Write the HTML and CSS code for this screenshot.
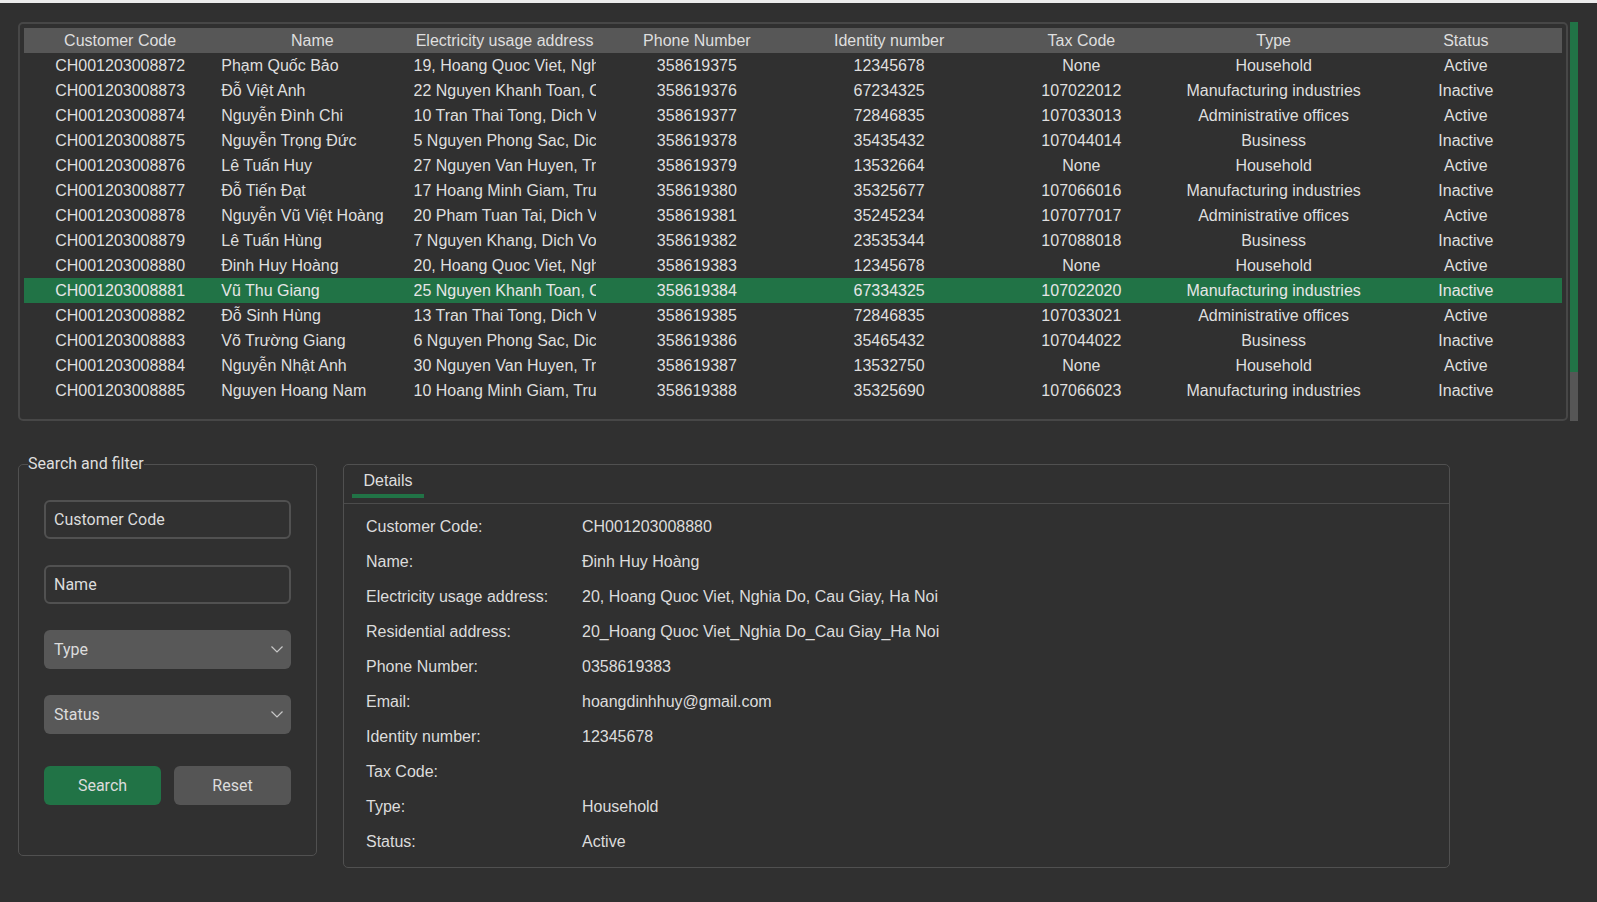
FILE: index.html
```html
<!DOCTYPE html>
<html lang="vi">
<head>
<meta charset="utf-8">
<title>Customers</title>
<link rel="stylesheet" href="styles.css">
</head>
<body>
<div class="topbar"></div>
<main class="app">
  <div class="table-row">
    <div class="table-frame">
      <table class="grid">
        <colgroup>
          <col><col><col><col><col><col><col><col>
        </colgroup>
        <thead>
          <tr>
            <th>Customer Code</th><th>Name</th><th>Electricity usage address</th><th>Phone Number</th><th>Identity number</th><th>Tax Code</th><th>Type</th><th>Status</th>
          </tr>
        </thead>
        <tbody>
          <tr><td>CH001203008872</td><td class="l">Phạm Quốc Bảo</td><td class="l"><div class="clip">19, Hoang Quoc Viet, Ngh</div></td><td>358619375</td><td>12345678</td><td>None</td><td>Household</td><td>Active</td></tr>
          <tr><td>CH001203008873</td><td class="l">Đỗ Việt Anh</td><td class="l"><div class="clip">22 Nguyen Khanh Toan, C</div></td><td>358619376</td><td>67234325</td><td>107022012</td><td>Manufacturing industries</td><td>Inactive</td></tr>
          <tr><td>CH001203008874</td><td class="l">Nguyễn Đình Chi</td><td class="l"><div class="clip">10 Tran Thai Tong, Dich V</div></td><td>358619377</td><td>72846835</td><td>107033013</td><td>Administrative offices</td><td>Active</td></tr>
          <tr><td>CH001203008875</td><td class="l">Nguyễn Trọng Đức</td><td class="l"><div class="clip">5 Nguyen Phong Sac, Dic</div></td><td>358619378</td><td>35435432</td><td>107044014</td><td>Business</td><td>Inactive</td></tr>
          <tr><td>CH001203008876</td><td class="l">Lê Tuấn Huy</td><td class="l"><div class="clip">27 Nguyen Van Huyen, Tr</div></td><td>358619379</td><td>13532664</td><td>None</td><td>Household</td><td>Active</td></tr>
          <tr><td>CH001203008877</td><td class="l">Đỗ Tiến Đạt</td><td class="l"><div class="clip">17 Hoang Minh Giam, Tru</div></td><td>358619380</td><td>35325677</td><td>107066016</td><td>Manufacturing industries</td><td>Inactive</td></tr>
          <tr><td>CH001203008878</td><td class="l">Nguyễn Vũ Việt Hoàng</td><td class="l"><div class="clip">20 Pham Tuan Tai, Dich V</div></td><td>358619381</td><td>35245234</td><td>107077017</td><td>Administrative offices</td><td>Active</td></tr>
          <tr><td>CH001203008879</td><td class="l">Lê Tuấn Hùng</td><td class="l"><div class="clip">7 Nguyen Khang, Dich Vo</div></td><td>358619382</td><td>23535344</td><td>107088018</td><td>Business</td><td>Inactive</td></tr>
          <tr><td>CH001203008880</td><td class="l">Đinh Huy Hoàng</td><td class="l"><div class="clip">20, Hoang Quoc Viet, Ngh</div></td><td>358619383</td><td>12345678</td><td>None</td><td>Household</td><td>Active</td></tr>
          <tr class="sel"><td>CH001203008881</td><td class="l">Vũ Thu Giang</td><td class="l"><div class="clip">25 Nguyen Khanh Toan, C</div></td><td>358619384</td><td>67334325</td><td>107022020</td><td>Manufacturing industries</td><td>Inactive</td></tr>
          <tr><td>CH001203008882</td><td class="l">Đỗ Sinh Hùng</td><td class="l"><div class="clip">13 Tran Thai Tong, Dich V</div></td><td>358619385</td><td>72846835</td><td>107033021</td><td>Administrative offices</td><td>Active</td></tr>
          <tr><td>CH001203008883</td><td class="l">Võ Trường Giang</td><td class="l"><div class="clip">6 Nguyen Phong Sac, Dic</div></td><td>358619386</td><td>35465432</td><td>107044022</td><td>Business</td><td>Inactive</td></tr>
          <tr><td>CH001203008884</td><td class="l">Nguyễn Nhật Anh</td><td class="l"><div class="clip">30 Nguyen Van Huyen, Tr</div></td><td>358619387</td><td>13532750</td><td>None</td><td>Household</td><td>Active</td></tr>
          <tr><td>CH001203008885</td><td class="l">Nguyen Hoang Nam</td><td class="l"><div class="clip">10 Hoang Minh Giam, Tru</div></td><td>358619388</td><td>35325690</td><td>107066023</td><td>Manufacturing industries</td><td>Inactive</td></tr>
        </tbody>
      </table>
    </div>
    <div class="scrollbar"><div class="thumb"></div></div>
  </div>

  <div class="lower">
    <fieldset class="filter">
      <legend>Search and filter</legend>
      <div class="filter-body">
        <div class="entry">Customer Code</div>
        <div class="entry">Name</div>
        <div class="select"><span>Type</span><svg class="chev" width="12" height="7" viewBox="0 0 12 7"><path d="M0.5 0.5 L6 6 L11.5 0.5" fill="none" stroke="#c8c8c8" stroke-width="1.2"/></svg></div>
        <div class="select"><span>Status</span><svg class="chev" width="12" height="7" viewBox="0 0 12 7"><path d="M0.5 0.5 L6 6 L11.5 0.5" fill="none" stroke="#c8c8c8" stroke-width="1.2"/></svg></div>
        <div class="buttons">
          <button class="btn primary">Search</button>
          <button class="btn">Reset</button>
        </div>
      </div>
    </fieldset>

    <section class="details">
      <div class="tabs"><div class="tab">Details</div></div>
      <div class="info">
        <div class="k">Customer Code:</div><div class="v">CH001203008880</div>
        <div class="k">Name:</div><div class="v">Đinh Huy Hoàng</div>
        <div class="k">Electricity usage address:</div><div class="v">20, Hoang Quoc Viet, Nghia Do, Cau Giay, Ha Noi</div>
        <div class="k">Residential address:</div><div class="v">20_Hoang Quoc Viet_Nghia Do_Cau Giay_Ha Noi</div>
        <div class="k">Phone Number:</div><div class="v">0358619383</div>
        <div class="k">Email:</div><div class="v">hoangdinhhuy@gmail.com</div>
        <div class="k">Identity number:</div><div class="v">12345678</div>
        <div class="k">Tax Code:</div><div class="v"></div>
        <div class="k">Type:</div><div class="v">Household</div>
        <div class="k">Status:</div><div class="v">Active</div>
      </div>
    </section>
  </div>
</main>
</body>
</html>
```

FILE: styles.css
```css
html, body {
  margin: 0;
  padding: 0;
}
body {
  background: #303030;
  color: #dedede;
  font-family: "Liberation Sans", Arial, sans-serif;
  font-size: 16px;
  width: 1597px;
  height: 902px;
  overflow: hidden;
}
.topbar {
  height: 3px;
  background: #ececec;
}
.app {
  display: flex;
  flex-direction: column;
}
.table-row {
  display: flex;
  gap: 2px;
  margin-top: 19px;
  margin-left: 18px;
}
.table-frame {
  box-sizing: border-box;
  width: 1550px;
  height: 399px;
  border: 2px solid #474747;
  border-radius: 5px;
  padding: 4px;
  overflow: hidden;
}
.scrollbar {
  width: 8px;
  height: 399px;
  background: #565656;
  display: flex;
  flex-direction: column;
}
.thumb {
  height: 350px;
  background: #217346;
}
.grid {
  width: 1538px;
  table-layout: fixed;
  border-collapse: collapse;
  border-spacing: 0;
}
.grid th, .grid td {
  height: 25px;
  padding: 0 5px;
  line-height: 25px;
  font-weight: normal;
  text-align: center;
  white-space: nowrap;
  overflow: hidden;
  text-overflow: clip;
  color: #dfdfdf;
}
.grid th {
  background: #575757;
}
.grid td.l {
  text-align: left;
}
.grid .clip {
  overflow: hidden;
  white-space: nowrap;
}
.grid tr.sel td {
  background: #217346;
  color: #e6e6e6;
}

.lower {
  display: flex;
  align-items: flex-start;
  margin-top: 33px;
  margin-left: 18px;
  gap: 26px;
}
.filter {
  box-sizing: border-box;
  width: 299px;
  margin: 0;
  padding: 0;
  border: 1px solid #505050;
  border-radius: 5px;
  font-family: Roboto, "Liberation Sans", sans-serif;
}
.filter legend {
  margin-left: 9px;
  padding: 0;
  line-height: 20px;
  font-size: 16px;
  color: #dedede;
}
.filter-body {
  padding: 26px 25px 50px 25px;
  display: flex;
  flex-direction: column;
  gap: 26px;
}
.entry, .select {
  box-sizing: border-box;
  height: 39px;
  border-radius: 6px;
  display: flex;
  align-items: center;
  color: #dcdcdc;
  font-size: 16px;
}
.entry {
  border: 2px solid #515151;
  padding-left: 8px;
  background: #313131;
}
.select {
  background: #585858;
  padding-left: 10px;
  padding-right: 8px;
  justify-content: space-between;
}
.buttons {
  display: flex;
  gap: 13px;
  margin-top: 6px;
}
.btn {
  width: 117px;
  height: 39px;
  border: none;
  border-radius: 6px;
  background: #555555;
  color: #dcdcdc;
  font-family: Roboto, "Liberation Sans", sans-serif;
  font-size: 16px;
  padding: 0;
}
.btn.primary {
  background: #217346;
}

.details {
  box-sizing: border-box;
  width: 1107px;
  margin-top: 10px;
  border: 1px solid #505050;
  border-radius: 5px;
  padding-bottom: 8px;
}
.tabs {
  display: flex;
  padding-left: 8px;
  padding-bottom: 5px;
  border-bottom: 1px solid #4c4c4c;
}
.tab {
  width: 72px;
  text-align: center;
  padding-top: 6px;
  padding-bottom: 3px;
  line-height: 20px;
  border-bottom: 4px solid #217346;
  color: #dedede;
}
.info {
  display: grid;
  grid-template-columns: 216px 1fr;
  grid-auto-rows: 35px;
  padding: 5px 0 0 22px;
  line-height: 35px;
}
.info .k, .info .v {
  color: #dcdcdc;
  white-space: nowrap;
}
```
